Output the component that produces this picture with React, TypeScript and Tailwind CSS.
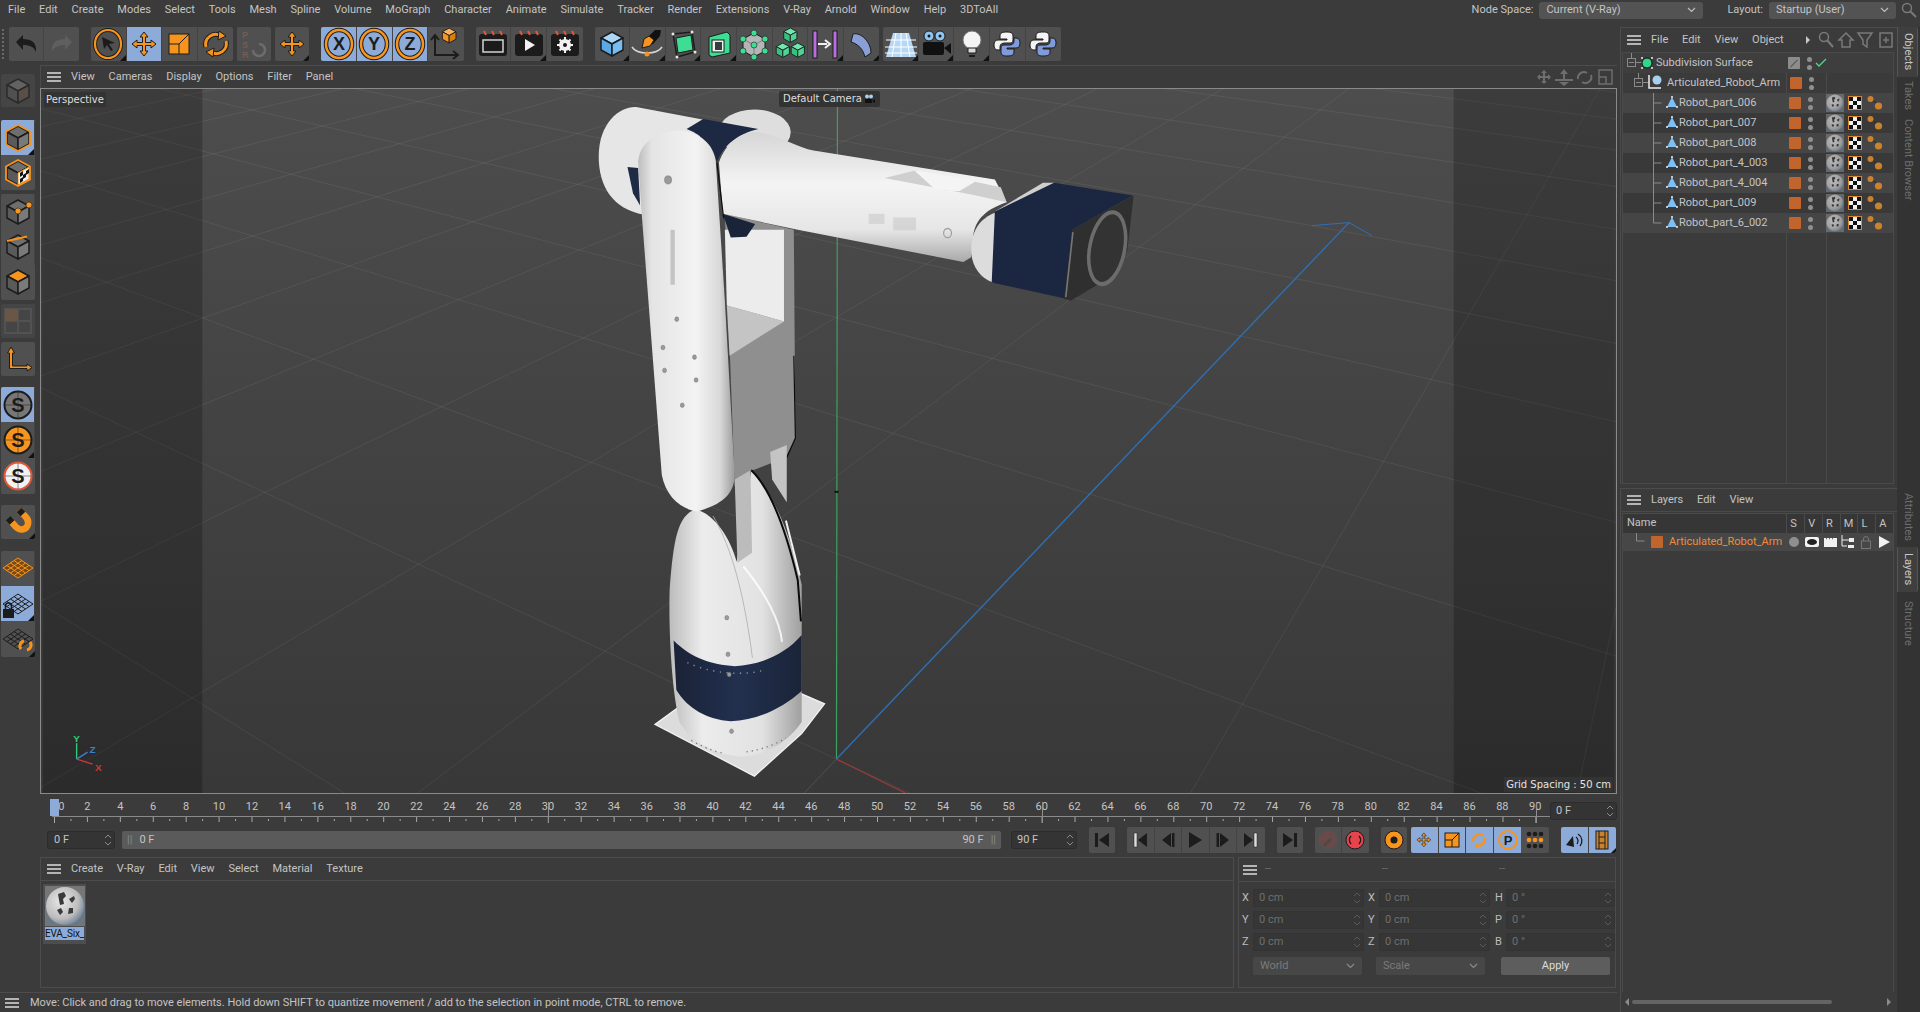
import React from 'react';

const MOVE = 'M18 5l4 5h-2.5v5.5h5.5v-2.5l5 4-5 4v-2.5h-5.5v5.5h2.5l-4 5-4-5h2.5v-5.5h-5.5v2.5l-5-4 5-4v2.5h5.5v-5.5h-2.5z';
const OR = '#f7941d';
const INK = '#1c1c1c';

// icon canvas shared by all toolbar buttons
const Fig = ({ children, w = 36, h = 34 }: { children: React.ReactNode; w?: number; h?: number }) => (
  <svg width={w} height={h} viewBox="0 0 36 34" className="block shrink-0">{children}</svg>
);

const Btn = ({ blue, flag, w = 'w-[35.6px]', h = 'h-[34px]', children }: any) => (
  <div className={`relative flex items-center justify-center shrink-0 ${w} ${h} ${blue ? 'bg-[#8cabd8]' : ''} border-r border-[#444444] last:border-r-0`}>
    {children}
    {flag && <span className="absolute right-0 bottom-0 w-0 h-0 border-l-[6px] border-l-transparent border-b-[6px] border-b-[#111111]" />}
  </div>
);

const Group = ({ className = '', children }: any) => (
  <div className={`flex shrink-0 rounded-[2px] overflow-hidden bg-[#505050] ${className}`}>{children}</div>
);

const Cube = ({ top = '#6e6e6e', left = '#5a5a5a', right = '#7a7a7a', line = INK }: any) => (
  <g stroke={line} strokeWidth="1.5" strokeLinejoin="round">
    <polygon points="18,5 29,11 18,17 7,11" fill={top} />
    <polygon points="7,11 18,17 18,29 7,23" fill={left} />
    <polygon points="29,11 18,17 18,29 29,23" fill={right} />
  </g>
);

const Ring = ({ letter }: { letter: string }) => (
  <Fig>
    <ellipse cx="18" cy="17" rx="13" ry="14" fill="none" stroke={INK} strokeWidth="4.5" />
    <ellipse cx="18" cy="17" rx="13" ry="14" fill="none" stroke={OR} strokeWidth="2.5" />
    <text x="18" y="23" textAnchor="middle" fontSize="18" fontWeight="700" fill={INK} fontFamily="Liberation Sans, sans-serif">{letter}</text>
  </Fig>
);

const Rotate = () => (
  <Fig>
    <g fill="none">
      <path d="M8 20a10 10 0 0 1 15-11" stroke={INK} strokeWidth="5" />
      <path d="M28 14a10 10 0 0 1-15 11" stroke={INK} strokeWidth="5" />
      <path d="M8 20a10 10 0 0 1 15-11" stroke={OR} strokeWidth="3" />
      <path d="M28 14a10 10 0 0 1-15 11" stroke={OR} strokeWidth="3" />
    </g>
    <polygon points="21,4 28,9 20,13" fill={OR} stroke={INK} />
    <polygon points="15,30 8,25 16,21" fill={OR} stroke={INK} />
  </Fig>
);

const Clapper = ({ children }: any) => (
  <Fig>
    <rect x="4" y="7" width="28" height="22" rx="3" fill="#1b1b1b" />
    <path d="M9 4l2 4M17 4l2 4M25 4l2 4" stroke="#e0583a" strokeWidth="2" />
    {children}
  </Fig>
);

const Python = () => (
  <Fig>
    <path d="M18 5c-5 0-7 1-7 4v3h7v1H9c-3 0-4 2-4 5s1 5 4 5h2v-3c0-3 2-4 5-4h5c2 0 3-1 3-3V9c0-3-2-4-6-4z" fill="#f4f4f4" stroke={INK} />
    <path d="M18 29c5 0 7-1 7-4v-3h-7v-1h9c3 0 4-2 4-5s-1-5-4-5h-2v3c0 3-2 4-5 4h-5c-2 0-3 1-3 3v4c0 3 2 4 6 4z" fill="#7f9bdb" stroke={INK} />
  </Fig>
);

const Spin = ({ dim }: { dim?: boolean }) => (
  <svg width="8" height="14" viewBox="0 0 8 14" className="shrink-0">
    <path d="M1 5l3-3 3 3M1 9l3 3 3-3" fill="none" stroke={dim ? '#5a5a5a' : '#8a8a8a'} />
  </svg>
);

const Chevron = ({ c = '#bdbdbd' }: { c?: string }) => (
  <svg width="9" height="6" viewBox="0 0 9 6" className="shrink-0">
    <path d="M1 1l3.5 3.5L8 1" fill="none" stroke={c} strokeWidth="1.2" />
  </svg>
);

const Burger = () => (
  <div className="flex flex-col gap-[2px] w-[14px] shrink-0">
    <span className="h-[2px] bg-[#b4b4b4]" />
    <span className="h-[2px] bg-[#b4b4b4]" />
    <span className="h-[2px] bg-[#b4b4b4]" />
  </div>
);

const SphereThumb = ({ size = 18 }: { size?: number }) => (
  <svg width={size} height={size} viewBox="0 0 40 40" className="shrink-0 block">
    <defs>
      <radialGradient id="ball" cx="40%" cy="38%" r="65%">
        <stop offset="0" stopColor="#e8e8e8" />
        <stop offset="0.7" stopColor="#bdbdbd" />
        <stop offset="1" stopColor="#76889a" />
      </radialGradient>
    </defs>
    <rect width="40" height="40" fill="#6d7782" />
    <rect width="40" height="11" fill="#767676" />
    <circle cx="20" cy="20" r="19" fill="url(#ball)" />
    <path d="M13 8l6-2 2 4-3 3 1 5-4 1-1-5zM24 13l5-3 1 3-3 4zM12 24l4-2 2 4-3 3zM24 22l4 0 0 5-5 1z" fill="#3a3a3a" />
  </svg>
);

const Checker = () => (
  <div className="grid grid-cols-3 w-[14px] h-[14px] border border-[#d98a2f] shrink-0">
    {[1, 0, 1, 0, 1, 0, 1, 0, 1].map((b, i) => (
      <span key={i} className={b ? 'bg-[#111111]' : 'bg-[#f2f2f2]'} />
    ))}
  </div>
);

const Balls = () => (
  <svg width="18" height="16" viewBox="0 0 18 16" className="shrink-0">
    <path d="M5 4l9 7" stroke="#2b2b2b" />
    <circle cx="4.5" cy="4" r="3" fill="#c9822f" />
    <circle cx="12.5" cy="11" r="3.6" fill="#c9822f" />
  </svg>
);

const Dots = () => (
  <div className="flex flex-col gap-[3px] w-[6px] shrink-0">
    <span className="w-[5px] h-[5px] rounded-full bg-[#8f8f8f]" />
    <span className="w-[5px] h-[5px] rounded-full bg-[#8f8f8f]" />
  </div>
);

const Menu = ({ items, className = '' }: { items: string[]; className?: string }) => (
  <div className={`flex items-center pt-[1px] ${className}`}>
    {items.map((m) => <span key={m} className="whitespace-nowrap">{m}</span>)}
  </div>
);

// floor grid, measured from the reference: both families run to a vanishing point on the horizon
const VPA = [-1338, -254];
const VPB = [1800, -253];
const O = [836, 760];
const lineA: number[][] = [];
const lineB: number[][] = [];
for (let k = -2; k <= 16; k++) {
  const dx = k / (0.0059 + 0.001 * k);
  const p = [O[0] + dx, O[1] - 1.051 * dx];
  lineA.push([VPA[0], VPA[1], VPA[0] + (p[0] - VPA[0]) * 3, VPA[1] + (p[1] - VPA[1]) * 3]);
}
for (let j = -2; j <= 16; j++) {
  if (j === 0) continue;
  const dx = j / (0.00385 + 0.00046 * j);
  const p = [O[0] - dx, O[1] - 0.466 * dx];
  lineB.push([VPB[0], VPB[1], VPB[0] + (p[0] - VPB[0]) * 4, VPB[1] + (p[1] - VPB[1]) * 4]);
}

const Scene = () => (
  <svg viewBox="40 88 1576 706" className="absolute inset-0 w-full h-full">
    <defs>
      <linearGradient id="floor" x1="0" y1="0" x2="0" y2="1">
        <stop offset="0" stopColor="#4d4d4d" />
        <stop offset="1" stopColor="#383838" />
      </linearGradient>
      <linearGradient id="armH" x1="0" y1="0" x2="0" y2="1">
        <stop offset="0" stopColor="#d6d6d6" />
        <stop offset="0.4" stopColor="#f4f4f4" />
        <stop offset="0.75" stopColor="#e6e6e6" />
        <stop offset="1" stopColor="#a9a9a9" />
      </linearGradient>
      <linearGradient id="armV" x1="0" y1="0" x2="1" y2="0">
        <stop offset="0" stopColor="#bdbdbd" />
        <stop offset="0.14" stopColor="#e4e4e4" />
        <stop offset="0.6" stopColor="#f3f3f3" />
        <stop offset="0.85" stopColor="#d8d8d8" />
        <stop offset="1" stopColor="#9a9a9a" />
      </linearGradient>
      <linearGradient id="baseG" x1="0" y1="0" x2="1" y2="0">
        <stop offset="0" stopColor="#bcbcbc" />
        <stop offset="0.25" stopColor="#ececec" />
        <stop offset="0.7" stopColor="#e2e2e2" />
        <stop offset="1" stopColor="#a0a0a0" />
      </linearGradient>
      <linearGradient id="navy" x1="0" y1="0" x2="1" y2="0">
        <stop offset="0" stopColor="#1a2236" />
        <stop offset="0.5" stopColor="#22304f" />
        <stop offset="1" stopColor="#1a2438" />
      </linearGradient>
    </defs>
    <rect x="40" y="88" width="1576" height="706" fill="url(#floor)" />
    <g stroke="#ffffff" strokeOpacity="0.07" strokeWidth="1">
      {lineA.concat(lineB).map((l, i) => <line key={i} x1={l[0]} y1={l[1]} x2={l[2]} y2={l[3]} />)}
    </g>
    <line x1="836" y1="760" x2="798" y2="800" stroke="#ffffff" strokeOpacity="0.12" />
    <rect x="40" y="88" width="160" height="706" fill="#000000" fillOpacity="0.22" />
    <rect x="1455" y="88" width="161" height="706" fill="#000000" fillOpacity="0.22" />

    {/* world axis */}
    <line x1="837" y1="88" x2="836" y2="760" stroke="#3fa05f" strokeWidth="1.2" />
    <line x1="836" y1="760" x2="1350" y2="222" stroke="#2f6fb5" strokeWidth="1.4" />
    <path d="M1313 225l37-3 23 13" fill="none" stroke="#2f6fb5" strokeWidth="1" />
    <line x1="836" y1="760" x2="905" y2="794" stroke="#9c3a3a" strokeWidth="1.2" />
    <path d="M834 492h4" stroke="#111111" strokeWidth="2" />

    {/* robot, traced in the coordinates of the crop */}
    <g transform="translate(560,80) scale(0.3953,0.4592)">
      <ellipse cx="490" cy="112" rx="92" ry="50" fill="#dedede" />
      <path d="M95 165C95 90 150 55 190 57L365 85 350 130 210 292C130 280 95 230 95 165Z" fill="#e6e6e6" />
      <polygon points="168,188 195,190 200,272 182,245" fill="#1f2a45" />
      <polygon points="415,290 590,325 594,780 570,822 480,852 440,885" fill="#8f8f8f" />
      <polygon points="415,325 565,325 565,525 420,490" fill="#ececec" />
      <polygon points="420,490 565,525 427,600" fill="#c4c4c4" />
      <path d="M590 600L594 780 572 822" fill="none" stroke="#0d0d0d" strokeWidth="3" />
      <path d="M410 290L492 312 470 340 430 342Z" fill="#1a2438" />
      <path d="M318 105L360 83 500 105C450 115 410 140 395 178 380 135 350 115 318 105Z" fill="#1d2842" />

      {/* base */}
      <polygon points="238,1405 310,1360 600,1335 668,1360 610,1425 490,1518" fill="#dcdcdc" stroke="#f2f2f2" strokeWidth="3" />
      <path d="M275 1110C285 1000 295 950 340 935 390 945 430 1000 445 1050L482 850C540 900 585 1000 610 1100V1400C570 1450 510 1475 450 1475 390 1470 330 1445 300 1400 280 1330 272 1200 275 1110Z" fill="url(#baseG)" />
      <path d="M385 950C420 1000 460 1090 485 1260" fill="none" stroke="#b0b0b0" strokeWidth="2" />
      <path d="M285 1222C330 1260 380 1275 440 1278 510 1275 570 1250 610 1210V1332C560 1370 500 1395 430 1398 370 1395 320 1370 292 1330Z" fill="url(#navy)" />
      <path d="M320 1270C380 1295 470 1300 520 1285" fill="none" stroke="#9a9a9a" strokeWidth="3" strokeDasharray="3 14" />
      <path d="M330 1440C380 1465 420 1470 400 1465M470 1465C510 1460 540 1450 570 1435" fill="none" stroke="#777777" strokeWidth="3" strokeDasharray="3 10" />
      <path d="M462 1060C520 1120 555 1180 560 1225" fill="none" stroke="#ffffff" strokeWidth="5" opacity="0.8" />
      <path d="M482 850C530 890 570 980 600 1090L608 1180" fill="none" stroke="#0a0a0a" strokeWidth="5" />
      <path d="M570 960L605 1080" fill="none" stroke="#f2f2f2" strokeWidth="5" />
      <polygon points="440,870 480,850 484,1030 447,1052" fill="#bcbcbc" />
      <polygon points="530,810 572,795 572,920 535,870" fill="#c4c4c4" />

      {/* upper arm */}
      <path d="M400 178C420 130 460 110 500 112 560 122 600 145 640 152L1100 215 1130 265C1080 280 1050 300 1045 340L1040 385 1020 395 600 325 410 290Z" fill="url(#armH)" />
      <polygon points="820,212 900,195 960,238 1010,240 1050,220 1115,232 1130,265 1040,248" fill="#cfcfcf" />
      <polygon points="895,195 1050,218 1010,240 950,238" fill="#f4f4f4" />
      <path d="M1040 370C1040 320 1070 295 1110 285L1095 440C1060 430 1040 400 1040 370Z" fill="#dcdcdc" />
      <polygon points="1100,285 1222,222 1252,222 1110,292" fill="#cfcfcf" />
      <polygon points="1100,285 1250,222 1450,250 1296,325 1278,475 1092,440" fill="#1b2740" />
      <polygon points="1296,325 1452,250 1436,370 1370,440 1292,480 1275,475" fill="#2f2f2f" />
      <line x1="1298" y1="330" x2="1280" y2="472" stroke="#777777" strokeWidth="4" />
      <ellipse cx="1385" cy="365" rx="44" ry="80" transform="rotate(14 1385 365)" fill="#333333" stroke="#6c6c6c" strokeWidth="9" />
      <circle cx="980" cy="332" r="10" fill="none" stroke="#9f9f9f" strokeWidth="3" />
      <rect x="780" y="290" width="40" height="22" fill="#c9c9c9" opacity="0.6" />
      <rect x="842" y="298" width="58" height="28" fill="#c9c9c9" opacity="0.6" />

      {/* forearm */}
      <path d="M195 175C200 130 250 108 300 108 350 112 385 135 392 175L415 480 440 860C440 900 410 925 345 940 300 935 265 905 255 860L205 300Z" fill="url(#armV)" />
      <path d="M395 178L412 300" fill="none" stroke="#0d0d0d" strokeWidth="3" />
      <rect x="277" y="325" width="11" height="120" fill="#c4c4c4" />
      <g fill="#9a9a9a" stroke="#6a6a6a">
        <circle cx="271" cy="216" r="9" />
        <circle cx="293" cy="520" r="5" />
        <circle cx="258" cy="582" r="5" />
        <circle cx="338" cy="603" r="5" />
        <circle cx="262" cy="632" r="5" />
        <circle cx="342" cy="653" r="5" />
        <circle cx="307" cy="708" r="5" />
        <circle cx="420" cy="1172" r="5" />
        <circle cx="423" cy="1252" r="5" />
        <circle cx="426" cy="1296" r="5" />
        <circle cx="432" cy="1420" r="5" />
      </g>
    </g>

    {/* view gizmo */}
    <g strokeWidth="1.4" fontSize="10" fontWeight="700" fontFamily="Liberation Sans, sans-serif">
      <line x1="74" y1="760" x2="74" y2="744" stroke="#2ecc71" />
      <line x1="74" y1="760" x2="85" y2="753" stroke="#3a7fd0" />
      <line x1="74" y1="760" x2="90" y2="765" stroke="#d03838" />
      <text x="70.500" y="743" fill="#2ecc71" stroke="none">Y</text>
      <text x="87" y="754" fill="#3a7fd0" stroke="none">Z</text>
      <text x="92.500" y="772" fill="#d03838" stroke="none">X</text>
    </g>
  </svg>
);

const OutlinedCube = () => (
  <g>
    <Cube />
    <polygon points="18,4 30,10.500 30,23.500 18,30 6,23.500 6,10.500" fill="none" stroke={OR} strokeWidth="1.800" />
  </g>
);

const sideB = [
  <g key="a"><Cube /><circle cx="18" cy="16" r="3" fill={OR} stroke={INK} strokeWidth="0.600" /><circle cx="29" cy="10" r="3" fill={OR} stroke={INK} strokeWidth="0.600" /></g>,
  <g key="b"><Cube /><line x1="7" y1="11" x2="27" y2="6.500" stroke={OR} strokeWidth="2" /></g>,
  <g key="c"><Cube top={OR} /></g>,
];

const Grid3 = ({ color }: { color: string }) => (
  <g>
    <polygon points="18,7 33,17 18,27 3,17" fill={color === OR ? '#7a4a12' : 'none'} stroke={color} />
    <path d="M10.5 12l15 10M14 9.500l15 10M7 14.500l15 10M25.500 12l-15 10M22 9.500l-15 10M29 14.500l-15 10" stroke={color} fill="none" />
  </g>
);

const Strip = () => (
  <div className="w-[36px] shrink-0 flex flex-col pl-[1px] pt-[9px]">
    <Group className="flex-col w-[34px] h-[33px] items-center justify-center opacity-50">
      <Fig><Cube top="#8a8a8a" left="#666666" right="#7a6258" /></Fig>
    </Group>
    <Group className="flex-col mt-[13px] w-[34px]">
      <Btn w="w-[34px]" h="h-[35px]" blue flag><Fig><OutlinedCube /></Fig></Btn>
      <Btn w="w-[34px]" h="h-[35px]">
        <Fig>
          <OutlinedCube />
          <polygon points="18,17 29,11 29,23 18,29" fill="#f2f2f2" stroke={OR} />
          <path d="M20 17l3-2v4l-3 2zM26 15l3-2v4l-3 2zM23 19l3-2v4l-3 2zM20 23l3-2v4l-3 2z" fill="#111111" />
        </Fig>
      </Btn>
    </Group>
    <Group className="flex-col mt-[4px] w-[34px]">
      {sideB.map((s, i) => <Btn key={i} w="w-[34px]" h="h-[35.300px]"><Fig>{s}</Fig></Btn>)}
    </Group>
    <Group className="flex-col mt-[4px] w-[34px] opacity-50">
      <Btn w="w-[34px]"><Fig><path d="M5 5h26v24H5zM18 5v24M5 17h26" fill="none" stroke="#6a6a6a" strokeWidth="2" /><rect x="5" y="5" width="13" height="12" fill="#9a7250" /></Fig></Btn>
    </Group>
    <Group className="flex-col mt-[4px] w-[34px]">
      <Btn w="w-[34px]"><Fig><path d="M11 5l3.500 6H12.500v13H27v-2l5 3.500-5 3.500v-2.500H9.500V11H7.500z" fill={OR} stroke={INK} /></Fig></Btn>
    </Group>
    <Group className="flex-col mt-[11px] w-[34px]">
      {[['#777777', true, false], [OR, false, true], ['#f2f2f2', false, false]].map((s: any, i) => (
        <Btn key={i} w="w-[34px]" h="h-[35.600px]" blue={s[1]} flag={s[2]}>
          <Fig>
            <circle cx="18" cy="17" r="13.500" fill={s[0]} stroke={i === 2 ? '#e0583a' : INK} strokeWidth="2" />
            <path d="M5 17h26M18 4v26" stroke={INK} strokeWidth="0.500" />
            <text x="18" y="24" textAnchor="middle" fontSize="20" fontWeight="700" fill={INK} fontFamily="Liberation Sans, sans-serif">S</text>
          </Fig>
        </Btn>
      ))}
    </Group>
    <Group className="flex-col mt-[11px] w-[34px]">
      <Btn w="w-[34px]" flag>
        <Fig>
          <path d="M8 13L16 22C20 26 27 25 28 19 29 14 26 12 23 9L19 5" fill="none" stroke={OR} strokeWidth="6.500" />
          <path d="M8 13L12 17.500M23 9L19 5" fill="none" stroke={INK} strokeWidth="6.500" />
        </Fig>
      </Btn>
    </Group>
    <Group className="flex-col mt-[12px] w-[34px]">
      <Btn w="w-[34px]" h="h-[35.300px]"><Fig><Grid3 color={OR} /></Fig></Btn>
      <Btn w="w-[34px]" h="h-[35.300px]" blue flag>
        <Fig>
          <Grid3 color={INK} />
          <rect x="3" y="22" width="11" height="9" fill={INK} />
          <path d="M5.500 22v-3a3 3 0 0 1 6 0v3" fill="none" stroke={INK} strokeWidth="1.600" />
        </Fig>
      </Btn>
      <Btn w="w-[34px]" h="h-[35.300px]" flag>
        <Fig>
          <Grid3 color={INK} />
          <path d="M21 27a5 5 0 0 1 3-8M30 20a5 5 0 0 1-3 8" fill="none" stroke={OR} strokeWidth="3" />
        </Fig>
      </Btn>
    </Group>
  </div>
);

const Toolbar = () => (
  <div className="flex h-[34px] mt-[7px] pl-[2px]">
    <span className="w-[3px] h-[30px] mt-[2px] mr-[4px] border-l-2 border-dotted border-[#6a6a6a]" />
    <Group>
      <Btn w="w-[35px]"><Fig><path d="M8 15l7-7v4c8 0 14 3 13 13-2-5-6-7-13-7v5z" fill={INK} /></Fig></Btn>
      <Btn w="w-[35px]"><Fig><path d="M28 15l-7-7v4c-8 0-14 3-13 13 2-5 6-7 13-7v5z" fill="#5f5f5f" /></Fig></Btn>
    </Group>
    <Group className="ml-[12px]">
      <Btn flag><Fig>
        <ellipse cx="18" cy="17" rx="13" ry="14" fill="none" stroke={INK} strokeWidth="4" />
        <ellipse cx="18" cy="17" rx="13" ry="14" fill="none" stroke={OR} strokeWidth="2.200" />
        <path d="M12 10l13 6-6 1 4 6-2 1-4-6-3 4z" fill={INK} />
      </Fig></Btn>
      <Btn blue><Fig><path d={MOVE} fill={OR} stroke={INK} strokeWidth="1" /></Fig></Btn>
      <Btn><Fig><rect x="8" y="7" width="20" height="20" fill={OR} stroke={INK} /><path d="M8 17h10V27M28 7L18 17" fill="none" stroke={INK} /></Fig></Btn>
      <Btn><Rotate /></Btn>
    </Group>
    <Group className="ml-[4px]">
      <Btn w="w-[34px]">
        <Fig>
          <g fontSize="9" fontWeight="700" fill="#7a5a52" fontFamily="Liberation Sans, sans-serif">
            <text x="6" y="11">P</text>
            <text x="6" y="21">S</text>
            <text x="6" y="31">R</text>
          </g>
          <path d="M17 23a6 6 0 1 0 6-6" fill="none" stroke="#6c6c6c" strokeWidth="2.500" />
        </Fig>
      </Btn>
    </Group>
    <Group className="ml-[4px]">
      <Btn w="w-[34px]" flag><Fig><path d={MOVE} fill={OR} stroke={INK} strokeWidth="1" /></Fig></Btn>
    </Group>
    <Group className="ml-[12px]">
      <Btn blue><Ring letter="X" /></Btn>
      <Btn blue><Ring letter="Y" /></Btn>
      <Btn blue><Ring letter="Z" /></Btn>
      <Btn>
        <Fig>
          <path d="M7 29V9M3 13l4-5 4 5M7 28h22M25 24l5 4-5 4" fill="none" stroke={INK} strokeWidth="2" />
          <g transform="translate(10,-2) scale(0.62)"><Cube top="#ffb25a" left={OR} right="#d97f12" /></g>
        </Fig>
      </Btn>
    </Group>
    <Group className="ml-[12px]">
      <Btn><Clapper><rect x="8" y="13" width="20" height="12" fill="none" stroke="#d4d4d4" strokeWidth="1.500" /></Clapper></Btn>
      <Btn flag><Clapper><polygon points="14,12 24,18 14,24" fill="#f2f2f2" /></Clapper></Btn>
      <Btn><Clapper>
        <circle cx="18" cy="18" r="6" fill="#f2f2f2" />
        <circle cx="18" cy="18" r="2" fill="#1b1b1b" />
        <path d="M18 10v3M18 23v3M10 18h3M23 18h3M12.500 12.500l2 2M21.500 21.500l2 2M12.500 23.500l2-2M21.500 14.500l2-2" stroke="#f2f2f2" strokeWidth="2" />
      </Clapper></Btn>
    </Group>
    <Group className="ml-[12px]">
      <Btn flag><Fig><Cube top="#a9d8f8" left="#5aa8e6" right="#79bdf0" /></Fig></Btn>
      <Btn flag><Fig>
        <path d="M14 19l4-8 8-8 6 0-1 6-7 8z" fill="#111111" />
        <path d="M13 21l2-9 5-3 5 4-4 6z" fill={OR} stroke={INK} />
        <path d="M3 20c5 8 25 8 30 0" fill="none" stroke="#d5d5d5" strokeWidth="1.500" />
        <circle cx="18" cy="27" r="2.500" fill={OR} />
      </Fig></Btn>
      <Btn flag><Fig>
        <path d="M8 7l19-2 3 20-18 5z" fill="none" stroke={INK} strokeWidth="1.500" />
        <polygon points="11,11 26,8 28,23 13,26" fill="#3fdc93" stroke={INK} />
        <g fill="#e8e8e8"><circle cx="8" cy="7" r="1.500" /><circle cx="27" cy="5" r="1.500" /><circle cx="30" cy="25" r="1.500" /><circle cx="12" cy="30" r="1.500" /></g>
      </Fig></Btn>
      <Btn flag><Fig>
        <polygon points="8,10 26,5 29,8 29,26 11,30 8,28" fill="#3fdc93" stroke={INK} />
        <rect x="11" y="13" width="12" height="12" fill="#e9f5ef" stroke={INK} />
        <rect x="14" y="15" width="7" height="8" fill="#3a3a3a" />
      </Fig></Btn>
      <Btn><Fig>
        <polygon points="18,6 29,12 29,24 18,30 7,24 7,12" fill="#b5b5b5" stroke={INK} />
        <path d="M18 18L7 12M18 18l11-6M18 18v12" stroke="#808080" />
        <g fill="#3fdc93" stroke={INK} strokeWidth="0.600">
          <circle cx="18" cy="6" r="3" /><circle cx="29" cy="12" r="3" /><circle cx="29" cy="24" r="3" />
          <circle cx="18" cy="30" r="3" /><circle cx="7" cy="24" r="3" /><circle cx="7" cy="12" r="3" /><circle cx="18" cy="18" r="3" />
        </g>
      </Fig></Btn>
      <Btn><Fig>
        <g transform="translate(7.500,-2) scale(0.6)"><Cube top="#6fe7ae" left="#36c17f" right="#4ed496" /></g>
        <g transform="translate(0,13) scale(0.6)"><Cube top="#6fe7ae" left="#36c17f" right="#4ed496" /></g>
        <g transform="translate(15,13) scale(0.6)"><Cube top="#6fe7ae" left="#36c17f" right="#4ed496" /></g>
      </Fig></Btn>
      <Btn flag><Fig>
        <rect x="6" y="4" width="4" height="27" fill="#b86ee0" stroke={INK} />
        <rect x="26" y="4" width="4" height="27" fill="#b86ee0" stroke={INK} />
        <path d="M11 17h9M18 13l5 4-5 4" fill="none" stroke="#f2f2f2" strokeWidth="2" />
      </Fig></Btn>
      <Btn flag><Fig><path d="M10 7c8-2 18 8 18 19l-6 4C20 22 15 17 8 15z" fill="#8a9fd8" stroke={INK} /></Fig></Btn>
    </Group>
    <Group className="ml-[4px]">
      <Btn flag><Fig>
        <polygon points="10,6 26,6 33,30 3,30" fill="#b7d7f5" />
        <path d="M3 13h30M2 20h32M2 26h32M13 6L9 30M23 6l4 24M18 6v24" stroke="#ffffff" />
      </Fig></Btn>
      <Btn flag><Fig>
        <circle cx="11" cy="9" r="5" fill="#8fc6ef" stroke={INK} />
        <circle cx="22" cy="9" r="5" fill="#8fc6ef" stroke={INK} />
        <circle cx="11" cy="9" r="1.500" fill={INK} />
        <circle cx="22" cy="9" r="1.500" fill={INK} />
        <rect x="5" y="15" width="21" height="13" rx="2" fill="#111111" />
        <polygon points="26,21 33,16 33,27" fill="#111111" />
      </Fig></Btn>
      <Btn flag><Fig>
        <circle cx="18" cy="13" r="9" fill="#f4f4f4" stroke="#777777" />
        <path d="M14 21h8v5h-8z" fill="#dddddd" stroke={INK} />
        <path d="M15 29h6" stroke={INK} strokeWidth="2" />
      </Fig></Btn>
      <Btn><Python /></Btn>
      <Btn><Python /></Btn>
    </Group>
  </div>
);

const Viewport = () => (
  <div className="flex-1 flex flex-col min-w-0">
    <div className="h-[23px] border-t border-l border-[#4c4c4c] flex items-center pl-[6px] relative">
      <Burger />
      <Menu className="gap-[13.8px] ml-[10px]" items={['View', 'Cameras', 'Display', 'Options', 'Filter', 'Panel']} />
      <div className="ml-auto mr-[3px] flex items-center gap-[2px]">
        <svg width="78" height="18" viewBox="0 0 78 18">
          <path d="M8 2l3 3H9v3h3V6l3 3-3 3v-2H9v3h2l-3 3-3-3h2v-3H4v2L1 9l3-3v2h3V5H5z" fill="#6e6e6e" />
          <path d="M28 1l4 5h-3v5h8v2H19v-2h8V6h-3zM23 14h10l-5 4z" fill="#6e6e6e" />
          <path d="M42 11a6 6 0 0 1 9-6M55 7a6 6 0 0 1-9 7" fill="none" stroke="#6e6e6e" strokeWidth="2" />
          <path d="M63 2h13v14H63zM63 9h7v7" fill="none" stroke="#6e6e6e" strokeWidth="1.500" />
        </svg>
      </div>
    </div>
    <div className="relative h-[706px] border border-[#8a8a8a] overflow-hidden text-[10px] font-['DejaVu_Sans',sans-serif]">
      <Scene />
      <span className="absolute left-[3px] top-[3px] px-[2px] bg-[#333333] text-[#dedede] leading-[15px]">Perspective</span>
      <span className="absolute left-[738px] top-[2px] px-[4px] bg-[#333333] rounded-[2px] text-[#dedede] leading-[16px] flex items-center gap-[2px]">
        Default Camera
        <svg width="12" height="10" viewBox="0 0 12 10"><circle cx="3" cy="2.500" r="2" fill="#a8d0ee" /><circle cx="7" cy="2.500" r="2" fill="#a8d0ee" /><rect x="1" y="5" width="7" height="4" fill="#111111" /><polygon points="8,7 11,5 11,9" fill="#111111" /></svg>
      </span>
      <span className="absolute right-[3px] bottom-[1px] px-[2px] bg-[#333333] text-[#e4e4e4] leading-[15px]">Grid Spacing : 50 cm</span>
    </div>
  </div>
);

const frames = Array.from({ length: 46 }, (_, i) => i * 2);

const Timeline = () => (
  <div className="h-[33px] relative pl-[38px] flex">
    <div className="flex flex-col">
      <div className="flex h-[22px] items-end">
        {frames.map((f) => (
          <span key={f} className={`w-[32.920px] text-center text-[#c4c4c4] leading-[15px] pb-[2px] shrink-0 ${f === 0 ? 'pl-[14px]' : ''}`}>{f}</span>
        ))}
      </div>
      <svg width="1515" height="10" viewBox="0 0 1515 10" className="block">
        <line x1="14" y1="0.500" x2="1515" y2="0.500" stroke="#8a8a8a" />
        {frames.map((f) => (
          <g key={f}>
            <line x1={16.5 + f * 16.46} y1="1" x2={16.5 + f * 16.46} y2={f % 30 === 0 ? 7 : 6} stroke="#a8a8a8" />
            {f < 90 && <line x1={16.5 + (f + 1) * 16.46} y1="3" x2={16.5 + (f + 1) * 16.46} y2="5" stroke="#a8a8a8" />}
          </g>
        ))}
      </svg>
    </div>
    <span className="absolute left-[50px] top-[5px] w-[9px] h-[17px] bg-[#8cabd8]" />
    <span className="absolute left-[548px] top-[8px] w-px h-[21px] bg-[#909090]" />
    <span className="absolute left-[1042px] top-[8px] w-px h-[21px] bg-[#909090]" />
    <span className="absolute left-[1536px] top-[8px] w-px h-[21px] bg-[#909090]" />
    <div className="absolute right-0 top-[8px] w-[67px] h-[18px] bg-[#343434] border border-[#2c2c2c] rounded-[3px] flex items-center justify-between pl-[5px] pr-[2px] text-[#c4c4c4]">
      0 F <Spin />
    </div>
  </div>
);

const TB = ({ d, w = 'w-[27.600px]' }: { d: React.ReactNode; w?: string }) => (
  <div className={`flex items-center justify-center ${w} h-full border-r border-[#444444] last:border-r-0`}>
    <svg width="20" height="20" viewBox="0 0 20 20">{d}</svg>
  </div>
);

const Transport = () => (
  <div className="h-[26px] flex items-center text-[#c4c4c4]">
    <div className="ml-[47px] w-[68px] h-[18px] bg-[#343434] border border-[#2c2c2c] rounded-[3px] flex items-center justify-between pl-[6px] pr-[2px]">0 F <Spin /></div>
    <div className="ml-[7px] w-[879px] h-[18px] bg-[#5a5a5a] rounded-[2px] flex items-center justify-between px-[5px]">
      <span className="flex items-center gap-[7px]"><span className="text-[#8a8a8a]">||</span>0 F</span>
      <span className="flex items-center gap-[7px]">90 F<span className="text-[#8a8a8a]">||</span></span>
    </div>
    <div className="ml-[10px] w-[66px] h-[18px] bg-[#343434] border border-[#2c2c2c] rounded-[3px] flex items-center justify-between pl-[5px] pr-[2px]">90 F <Spin /></div>
    <div className="ml-[12px] flex items-stretch h-[26px]">
      <Group className="h-full"><TB w="w-[26px]" d={<path d="M3 3h3v14H3zM17 3v14L7 10z" fill={INK} />} /></Group>
      <Group className="h-full ml-[12px]">
        <TB d={<><path d="M17 3v14L8 10z" fill={INK} /><rect x="4" y="3" width="3" height="14" fill="#dddddd" stroke={INK} strokeWidth="0.500" /></>} />
        <TB d={<><path d="M13 3v14L4 10z" fill={INK} /><rect x="14" y="3" width="2.500" height="14" fill={INK} /></>} />
        <TB d={<path d="M4 2v16l13-8z" fill={INK} />} />
        <TB d={<><path d="M7 3v14l9-7z" fill={INK} /><rect x="3.500" y="3" width="2.500" height="14" fill={INK} /></>} />
        <TB d={<><path d="M3 3v14l9-7z" fill={INK} /><rect x="13" y="3" width="3" height="14" fill="#dddddd" stroke={INK} strokeWidth="0.500" /></>} />
      </Group>
      <Group className="h-full ml-[12px]"><TB w="w-[26px]" d={<path d="M14 3h3v14h-3zM3 3v14l10-7z" fill={INK} />} /></Group>
      <Group className="h-full ml-[12px] relative">
        <TB w="w-[27px]" d={<><circle cx="10" cy="10" r="9" fill="#694a48" stroke="#555555" /><path d="M5 15l7-7 2 2-7 7z" fill="#4a4a4a" /></>} />
        <TB w="w-[27px]" d={<><circle cx="10" cy="10" r="9" fill="#e8424c" stroke={INK} /><path d="M6 14a6 6 0 0 1 0-8M14 6a6 6 0 0 1 0 8" fill="none" stroke={INK} strokeWidth="1.500" /></>} />
      </Group>
      <Group className="h-full ml-[12px]"><TB w="w-[26px]" d={<><circle cx="10" cy="10" r="9" fill={OR} stroke={INK} /><circle cx="10" cy="10" r="3.500" fill={INK} /></>} /></Group>
      <Group className="h-full ml-[4px]">
        <div className="flex bg-[#8cabd8] h-full">
          <TB d={<g transform="scale(0.58) translate(-1,0)"><path d={MOVE} fill={OR} stroke={INK} /></g>} />
          <TB d={<><rect x="3" y="3" width="14" height="14" fill={OR} stroke={INK} /><path d="M3 10h7v7M17 3l-7 7" fill="none" stroke={INK} /></>} />
          <TB d={<path d="M4 12a7 7 0 0 1 10-7M16 8a7 7 0 0 1-10 7" fill="none" stroke={OR} strokeWidth="2.500" />} />
          <TB d={<><circle cx="10" cy="10" r="9" fill="none" stroke={OR} strokeWidth="2" /><text x="10" y="15" textAnchor="middle" fontSize="13" fontWeight="700" fill={INK} fontFamily="Liberation Sans, sans-serif">P</text></>} />
        </div>
        <TB d={<g>{[4, 10, 16].map((y) => [4, 10, 16].map((x) => <circle key={x + '-' + y} cx={x} cy={y} r="2.300" fill={y === 10 ? OR : INK} />))}</g>} />
      </Group>
      <Group className="h-full ml-[12px] relative">
        <div className="flex bg-[#8cabd8] h-full">
          <TB d={<><path d="M2 15l7-9 1 11z" fill={INK} /><path d="M12 7a5 5 0 0 1 1 7M14 4a8 8 0 0 1 2 12" fill="none" stroke={INK} strokeWidth="1.300" /></>} />
          <TB d={<><rect x="4" y="1" width="12" height="18" fill="#c9822f" stroke={INK} /><path d="M7 1v18M13 1v18M7 7h6M7 13h6" stroke={INK} /></>} />
        </div>
        <span className="absolute right-0 bottom-0 w-0 h-0 border-l-[5px] border-l-transparent border-b-[5px] border-b-[#111111]" />
      </Group>
    </div>
  </div>
);

const CoordRow = ({ a, b, c, ua, uc }: any) => (
  <div className="flex h-[22px] items-center text-[#bcbcbc]">
    {[[a, ua, 'w-[111px]', 'ml-[0px]'], [b, ua, 'w-[111px]', 'ml-[1px]'], [c, uc, 'w-[109px]', 'ml-[2px]']].map((f: any, i) => (
      <React.Fragment key={i}>
        <span className={`w-[14px] pl-[3px] ${f[3]}`}>{f[0]}</span>
        <div className={`${f[2]} h-[18px] bg-[#363636] border border-[#333333] rounded-[2px] flex items-center justify-between pl-[5px] pr-[2px] text-[#6e6e6e]`}>
          {f[1]} <Spin dim />
        </div>
      </React.Fragment>
    ))}
  </div>
);

const BottomPanels = () => (
  <div className="h-[131px] mt-[4px] flex pl-[40px] pr-[1px]">
    <div className="w-[1194px] border border-[#4c4c4c] flex flex-col">
      <div className="h-[23px] border-b border-[#4c4c4c] flex items-center pl-[6px] shrink-0">
        <Burger />
        <Menu className="gap-[13.8px] ml-[10px]" items={['Create', 'V-Ray', 'Edit', 'View', 'Select', 'Material', 'Texture']} />
      </div>
      <div className="mt-[3px] ml-[2px] w-[43px] h-[60px] bg-[#4d4d4d] p-[2px] flex flex-col">
        <SphereThumb size={40} />
        <span className="mt-[1px] bg-[#8cabd8] text-[#111111] text-[10px] leading-[13px] whitespace-nowrap tracking-[-0.2px]">EVA_Six_</span>
      </div>
    </div>
    <div className="ml-[4px] flex-1 border border-[#4c4c4c] flex flex-col">
      <div className="h-[24px] border-b border-[#4c4c4c] flex items-center pl-[4px] text-[#6e6e6e] shrink-0">
        <Burger />
        <span className="ml-[8px] w-[117px]">--</span>
        <span className="w-[117px]">--</span>
        <span>--</span>
      </div>
      <div className="pt-[5px]">
        <CoordRow a="X" b="X" c="H" ua="0 cm" uc="0 °" />
        <CoordRow a="Y" b="Y" c="P" ua="0 cm" uc="0 °" />
        <CoordRow a="Z" b="Z" c="B" ua="0 cm" uc="0 °" />
      </div>
      <div className="flex items-center h-[18px] mt-[4px] pl-[14px] text-[#7a7a7a]">
        <div className="w-[109px] h-full bg-[#474747] rounded-[2px] flex items-center justify-between px-[7px]">World <Chevron c="#8a8a8a" /></div>
        <div className="ml-[14px] w-[109px] h-full bg-[#474747] rounded-[2px] flex items-center justify-between px-[7px]">Scale <Chevron c="#8a8a8a" /></div>
        <div className="ml-[16px] w-[109px] h-full bg-[#5d5d5d] rounded-[2px] flex items-center justify-center text-[#dcdcdc]">Apply</div>
      </div>
    </div>
  </div>
);

const parts = ['Robot_part_006', 'Robot_part_007', 'Robot_part_008', 'Robot_part_4_003', 'Robot_part_4_004', 'Robot_part_009', 'Robot_part_6_002'];

const ObjectPanel = () => (
  <div className="h-[457px] border-t border-l border-[#4c4c4c] flex flex-col">
    <div className="h-[24px] shrink-0 flex items-center pl-[6px]">
      <Burger />
      <Menu className="gap-[13.8px] ml-[10px]" items={['File', 'Edit', 'View', 'Object']} />
      <span className="ml-[22px] w-0 h-0 border-l-[4px] border-l-[#c8c8c8] border-y-[4px] border-y-transparent" />
      <svg width="76" height="18" viewBox="0 0 76 18" className="ml-[8px]">
        <circle cx="6" cy="6" r="4.500" fill="none" stroke="#7a7a7a" strokeWidth="1.500" />
        <path d="M9 9l6 7" stroke="#7a7a7a" strokeWidth="2" />
        <path d="M28 2l7 7h-3v7h-8V9h-3z" fill="none" stroke="#7a7a7a" strokeWidth="1.500" />
        <path d="M40 2h14l-5 7v7l-4-3V9z" fill="none" stroke="#7a7a7a" strokeWidth="1.500" />
        <rect x="62" y="2" width="12" height="14" fill="none" stroke="#7a7a7a" strokeWidth="1.500" />
        <path d="M65 9h6M68 6v6" stroke="#7a7a7a" strokeWidth="1.500" />
      </svg>
    </div>
    <div className="flex-1 mr-[3px] ml-[1px] border border-[#4a4a4a] relative flex flex-col overflow-hidden">
      <span className="absolute left-[163px] top-0 bottom-0 w-px bg-[#4a4a4a]" />
      <span className="absolute left-[203px] top-0 bottom-0 w-px bg-[#4a4a4a]" />
      <div className="h-[20px] shrink-0 flex items-center bg-[#3e3e3e] relative">
        <svg width="32" height="20" viewBox="0 0 32 20" className="shrink-0 ml-[4px]"><rect x="0.500" y="5.500" width="8" height="8" fill="none" stroke="#8a8a8a" /><path d="M2 9.500h5M4.500 0v5M9 9.500h6" stroke="#8a8a8a" /><circle cx="20" cy="10" r="5" fill="#32d38a" stroke="#111111" /><g fill="#eeeeee"><circle cx="15" cy="5" r="1" /><circle cx="25" cy="5" r="1" /><circle cx="15" cy="15" r="1" /><circle cx="25" cy="15" r="1" /></g></svg>
        <span className="ml-[-3px] w-[129px] pt-[1px] whitespace-nowrap">Subdivision Surface</span>
        <span className="ml-[3px] w-[12px] h-[12px] bg-[#8c8c8c] rounded-[1px] shrink-0 flex items-center justify-center"><span className="block w-[10px] h-px bg-[#555555] -rotate-45" /></span>
        <span className="ml-[7px]"><Dots /></span>
        <svg width="12" height="10" viewBox="0 0 12 10" className="ml-[2px]"><path d="M1 5l3 3 7-7" fill="none" stroke="#4bd98a" strokeWidth="1.300" /></svg>
      </div>
      <div className="h-[20px] shrink-0 flex items-center relative">
        <svg width="33" height="20" viewBox="0 0 33 20" className="shrink-0 ml-[11px]"><rect x="0.500" y="5.500" width="8" height="8" fill="none" stroke="#8a8a8a" /><path d="M2 9.500h5M4.500 0v5M9 9.500h6" stroke="#8a8a8a" /><path d="M15 2v13h12" fill="none" stroke="#eeeeee" strokeWidth="1.500" /><circle cx="23" cy="7" r="4.500" fill="#a8d0ee" /></svg>
        <span className="w-[119px] pt-[1px] whitespace-nowrap">Articulated_Robot_Arm</span>
        <span className="ml-[4px] w-[12px] h-[12px] bg-[#c1652c] rounded-[1px] shrink-0" />
        <span className="ml-[7px]"><Dots /></span>
      </div>
      {parts.map((p, i) => (
        <div key={p} className={`h-[20px] shrink-0 flex items-center relative ${i % 2 === 0 ? 'bg-[#454545]' : 'bg-[#393939]'}`}>
          <svg width="42" height="20" viewBox="0 0 42 20" className="shrink-0 ml-[18px]">
            <path d={`M12.500 0V${i === 6 ? 10 : 20}M12.500 10h8`} stroke="#8a8a8a" />
            <polygon points="31,4 36,14 26,14" fill="#7cc0f5" />
            <g fill="#eeeeee"><circle cx="31" cy="4" r="1" /><circle cx="36" cy="14" r="1" /><circle cx="26" cy="14" r="1" /></g>
          </svg>
          <span className="w-[103px] ml-[-4px] pt-[1px]">{p}</span>
          <span className="ml-[7px] w-[12px] h-[12px] bg-[#c1652c] rounded-[1px] shrink-0" />
          <span className="ml-[7px]"><Dots /></span>
          <span className="ml-[12px] opacity-75"><SphereThumb /></span>
          <span className="ml-[4px]"><Checker /></span>
          <span className="ml-[4px]"><Balls /></span>
        </div>
      ))}
    </div>
  </div>
);

const LayerPanel = () => (
  <div className="flex-1 mt-[4px] border-t border-l border-[#4c4c4c] flex flex-col">
    <div className="h-[23px] shrink-0 flex items-center pl-[6px] border-b border-[#4a4a4a]">
      <Burger />
      <Menu className="gap-[13.8px] ml-[10px]" items={['Layers', 'Edit', 'View']} />
    </div>
    <div className="flex-1 mr-[3px] ml-[1px] mt-[1px] border-l border-t border-r border-[#4a4a4a]">
      <div className="h-[19px] flex items-center bg-[#363636] pl-[4px]">
        <span className="w-[162px]">Name</span>
        {['S', 'V', 'R', 'M', 'L', 'A'].map((c) => (
          <span key={c} className="w-[18px] pl-[3px] border-l border-[#4a4a4a] leading-[19px]">{c}</span>
        ))}
      </div>
      <div className="h-[18px] flex items-center bg-[#474747] relative">
        <svg width="24" height="18" viewBox="0 0 24 18" className="ml-[6px] shrink-0"><path d="M7.500 0v8h8" fill="none" stroke="#8a8a8a" /></svg>
        <span className="ml-[-2px] w-[12px] h-[12px] bg-[#c1652c] rounded-[1px] shrink-0" />
        <span className="ml-[6px] w-[121px] text-[#f08d3c] whitespace-nowrap">Articulated_Robot_Arm</span>
        <div className="flex items-center ml-[-2px]">
          <span className="w-[18px] flex justify-center"><span className="w-[10px] h-[10px] rounded-full bg-[#8f8f8f]" /></span>
          <span className="w-[18px] flex justify-center"><svg width="14" height="10" viewBox="0 0 14 10"><rect width="14" height="10" rx="2" fill="#f2f2f2" /><ellipse cx="7" cy="5" rx="5" ry="3" fill="#222222" /></svg></span>
          <span className="w-[18px] flex justify-center"><svg width="13" height="10" viewBox="0 0 13 10"><path d="M0 1l2 0 1 2 0-2h2l1 2 0-2h2l1 2 0-2h4v9H0z" fill="#f2f2f2" /></svg></span>
          <span className="w-[18px] flex justify-center"><svg width="14" height="14" viewBox="0 0 14 14"><path d="M1 0v11h5M1 5h7" fill="none" stroke="#eeeeee" /><rect x="8" y="3" width="5" height="4" fill="#eeeeee" /><rect x="7" y="10" width="6" height="3" fill="#eeeeee" /></svg></span>
          <span className="w-[18px] flex justify-center"><svg width="10" height="13" viewBox="0 0 10 13"><rect x="0.500" y="5" width="9" height="7.500" fill="none" stroke="#777777" /><path d="M2.500 5V3a2.500 2.500 0 0 1 5 0v2" fill="none" stroke="#777777" /></svg></span>
          <span className="w-[18px] flex justify-center"><svg width="11" height="12" viewBox="0 0 11 12"><polygon points="0,0 11,6 0,12" fill="#f2f2f2" /></svg></span>
        </div>
      </div>
    </div>
    <div className="h-[20px] shrink-0 flex items-center pl-[4px] pr-[6px] gap-[3px]">
      <span className="w-0 h-0 border-r-[4px] border-r-[#8a8a8a] border-y-[4px] border-y-transparent" />
      <span className="w-[200px] h-[4px] bg-[#646464] rounded-full" />
      <span className="ml-auto w-0 h-0 border-l-[4px] border-l-[#8a8a8a] border-y-[4px] border-y-transparent" />
    </div>
  </div>
);

const Tab = ({ label, active, className = '' }: { label: string; active?: boolean; className?: string }) => (
  <div className={`w-[21px] shrink-0 flex items-center justify-center [writing-mode:vertical-rl] whitespace-nowrap ${active ? 'bg-[#3f3f3f] text-[#c8c8c8] border-y border-r border-[#555555] rounded-r-[3px]' : 'text-[#6e6e6e]'} ${className}`}>
    {label}
  </div>
);

export default function App() {
  return (
    <div className="w-[1920px] h-[1012px] overflow-hidden bg-[#3b3b3b] text-[#c4c4c4] text-[11px] flex flex-col font-['Roboto',sans-serif]">
      <div className="h-[20px] shrink-0 flex items-center pl-[8px]">
        <Menu className="gap-[13.8px]" items={['File', 'Edit', 'Create', 'Modes', 'Select', 'Tools', 'Mesh', 'Spline', 'Volume', 'MoGraph', 'Character', 'Animate', 'Simulate', 'Tracker', 'Render', 'Extensions', 'V-Ray', 'Arnold', 'Window', 'Help', '3DToAll']} />
        <div className="ml-auto flex items-center pr-[3px]">
          <span>Node Space:</span>
          <div className="ml-[6px] w-[164px] h-[17px] bg-[#535353] rounded-[3px] flex items-center justify-between px-[7px]">Current (V-Ray) <Chevron /></div>
          <span className="ml-[24px]">Layout:</span>
          <div className="ml-[6px] w-[127px] h-[17px] bg-[#535353] rounded-[3px] flex items-center justify-between px-[7px]">Startup (User) <Chevron /></div>
          <svg width="16" height="16" viewBox="0 0 16 16" className="ml-[5px]"><circle cx="6" cy="6" r="4.500" fill="none" stroke="#7a7a7a" strokeWidth="1.500" /><path d="M9 9l6 6" stroke="#7a7a7a" strokeWidth="2" /></svg>
        </div>
      </div>
      <div className="flex-1 flex min-h-0">
        <div className="w-[1617px] shrink-0 flex flex-col">
          <Toolbar />
          <div className="flex h-[729px] mt-[4px]">
            <Strip />
            <div className="w-[4px] shrink-0" />
            <Viewport />
          </div>
          <Timeline />
          <Transport />
          <BottomPanels />
          <div className="flex-1 mt-[4px] border-t border-[#4c4c4c] flex items-center pl-[5px]">
            <Burger />
            <span className="ml-[11px] pt-[2px] whitespace-nowrap">Move: Click and drag to move elements. Hold down SHIFT to quantize movement / add to the selection in point mode, CTRL to remove.</span>
          </div>
        </div>
        <div className="flex-1 flex min-w-0 pt-[7px] pl-[3px]">
          <div className="w-[277px] shrink-0 flex flex-col">
            <ObjectPanel />
            <LayerPanel />
          </div>
          <div className="flex-1 flex flex-col bg-[#333333]">
            <Tab label="Objects" active className="h-[50px]" />
            <Tab label="Takes" className="h-[36px]" />
            <Tab label="Content Browser" className="h-[94px]" />
            <div className="h-[280px] shrink-0" />
            <Tab label="Attributes" className="h-[60px]" />
            <Tab label="Layers" active className="h-[45px]" />
            <Tab label="Structure" className="h-[63px]" />
          </div>
        </div>
      </div>
    </div>
  );
}
